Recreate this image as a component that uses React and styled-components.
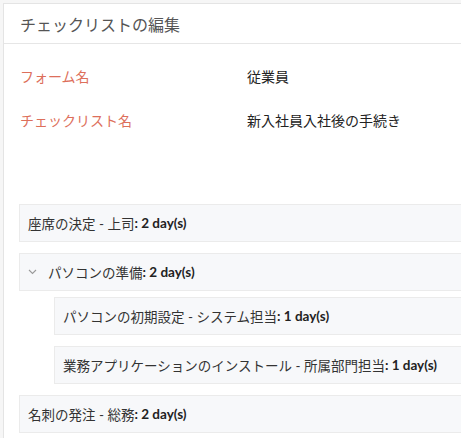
import React from 'react'
import styled, { createGlobalStyle } from "styled-components";

const GlobalStyle = createGlobalStyle`
  html, body {
    margin: 0;
    padding: 0;
    background: #f6f6f6;
    overflow: hidden;
  }
  body {
    font-family: Lato, "Noto Sans CJK JP", sans-serif;
  }
`;

const Panel = styled.div`
  margin: 3px 0 0 3px;
  min-height: 440px;
  background: #ffffff;
  border-top: 1px solid #e4e4e4;
  border-left: 1px solid #e4e4e4;
  box-sizing: border-box;
`;

const Header = styled.div`
  height: 39px;
  display: flex;
  align-items: center;
  padding-left: 16px;
  border-bottom: 1px solid #e6e6e6;
  font-size: 16px;
  color: #555555;
`;

const Form = styled.div`
  display: flex;
  flex-direction: column;
  gap: 24px;
  padding: 22px 0 0 16px;
`;

const Row = styled.div`
  display: flex;
  align-items: center;
  height: 20px;
  font-size: 14px;
`;

const Label = styled.div`
  width: 227px;
  color: #dd6f5b;
`;

const Value = styled.div`
  color: #222222;
`;

const List = styled.div`
  display: flex;
  flex-direction: column;
  gap: 11px;
  margin: 74px 0 0 15px;
`;

const Group = styled.div`
  display: flex;
  flex-direction: column;
  gap: 6px;
`;

const Children = styled.div`
  display: flex;
  flex-direction: column;
  gap: 11px;
  padding-left: 35px;
`;

// rows run on past the right edge of the window, so no right border
const Item = styled.div`
  height: 38px;
  box-sizing: border-box;
  display: flex;
  align-items: center;
  padding-left: 8px;
  background: #f7f8fa;
  border: 1px solid #ebebeb;
  border-right: none;
  font-size: 13.5px;
  color: #333333;
  white-space: nowrap;
  overflow: hidden;
`;

const Duration = styled.b`
  font-weight: 700;
  color: #222222;
`;

const Chevron = styled.svg`
  width: 9px;
  height: 6px;
  margin-right: 11px;
  flex-shrink: 0;
`;

const Task = ({ name, days, expandable }) => (
  <Item>
    {expandable && (
      <Chevron viewBox="0 0 9 6">
        <path d="M1 1l3.5 3.5L8 1" fill="none" stroke="#9a9a9a" strokeWidth="1.1" />
      </Chevron>
    )}
    {name}<Duration>: {days} day(s)</Duration>
  </Item>
);

export default function App() {
  return (
    <>
      <GlobalStyle />
      <Panel>
        <Header>チェックリストの編集</Header>
        <Form>
          <Row>
            <Label>フォーム名</Label>
            <Value>従業員</Value>
          </Row>
          <Row>
            <Label>チェックリスト名</Label>
            <Value>新入社員入社後の手続き</Value>
          </Row>
        </Form>
        <List>
          <Task name="座席の決定 - 上司" days={2} />
          <Group>
            <Task name="パソコンの準備" days={2} expandable />
            <Children>
              <Task name="パソコンの初期設定 - システム担当" days={1} />
              <Task name="業務アプリケーションのインストール - 所属部門担当" days={1} />
            </Children>
          </Group>
          <Task name="名刺の発注 - 総務" days={2} />
        </List>
      </Panel>
    </>
  );
}
